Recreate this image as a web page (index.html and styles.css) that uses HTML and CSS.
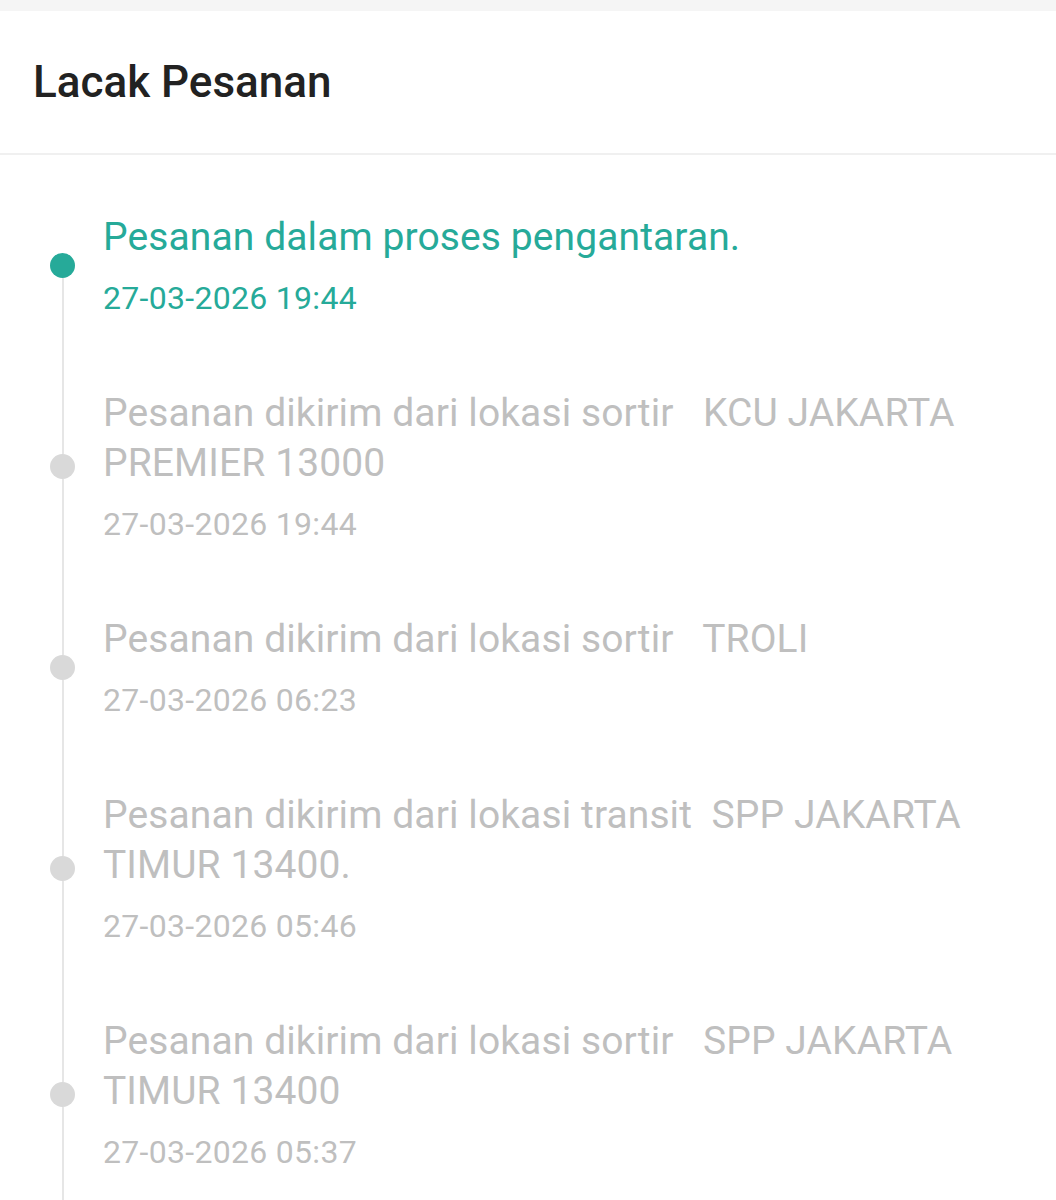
FILE: index.html
```html
<!DOCTYPE html>
<html lang="id">
<head>
<meta charset="utf-8">
<title>Lacak Pesanan</title>
<link rel="stylesheet" href="styles.css">
</head>
<body>
<div class="topbar"></div>
<header class="header">
  <h1 class="header-title">Lacak Pesanan</h1>
</header>
<ol class="timeline">
  <li class="event event-active event-first">
    <div class="rail"><span class="seg seg-top"></span><span class="dot"></span><span class="seg"></span></div>
    <div class="content">
      <div class="title">Pesanan dalam proses pengantaran.</div>
      <div class="date">27-03-2026 19:44</div>
    </div>
  </li>
  <li class="event">
    <div class="rail"><span class="seg"></span><span class="dot"></span><span class="seg"></span></div>
    <div class="content">
      <div class="title">Pesanan dikirim dari lokasi sortir   KCU JAKARTA PREMIER 13000</div>
      <div class="date">27-03-2026 19:44</div>
    </div>
  </li>
  <li class="event">
    <div class="rail"><span class="seg"></span><span class="dot"></span><span class="seg"></span></div>
    <div class="content">
      <div class="title">Pesanan dikirim dari lokasi sortir   TROLI</div>
      <div class="date">27-03-2026 06:23</div>
    </div>
  </li>
  <li class="event">
    <div class="rail"><span class="seg"></span><span class="dot"></span><span class="seg"></span></div>
    <div class="content">
      <div class="title">Pesanan dikirim dari lokasi transit  SPP JAKARTA TIMUR 13400.</div>
      <div class="date">27-03-2026 05:46</div>
    </div>
  </li>
  <li class="event">
    <div class="rail"><span class="seg"></span><span class="dot"></span><span class="seg"></span></div>
    <div class="content">
      <div class="title">Pesanan dikirim dari lokasi sortir   SPP JAKARTA TIMUR 13400</div>
      <div class="date">27-03-2026 05:37</div>
    </div>
  </li>
</ol>
</body>
</html>
```

FILE: styles.css
```css
html, body {
  margin: 0;
  padding: 0;
  background: #ffffff;
  font-family: Roboto, "Noto Sans", "Liberation Sans", sans-serif;
}

.topbar {
  height: 11px;
  background: #f5f5f5;
}

.header {
  height: 142px;
  display: flex;
  align-items: center;
  padding-left: 33px;
  border-bottom: 2px solid #f0f0f0;
}

.header-title {
  margin: 0;
  font-size: 44px;
  font-weight: 500;
  color: #222222;
  letter-spacing: 0;
}

.timeline {
  list-style: none;
  margin: 0;
  padding: 22px 35px 0 0;
}

.event {
  display: flex;
  align-items: stretch;
}

.rail {
  width: 103px;
  flex: 0 0 103px;
  display: flex;
  flex-direction: column;
  align-items: center;
  padding-left: 22px;
  padding-right: 0;
  box-sizing: border-box;
}

.seg {
  flex: 1 1 0;
  width: 2px;
  background: #e6e6e6;
}

.event-first .seg-top {
  background: transparent;
}

.dot {
  width: 25px;
  height: 25px;
  border-radius: 50%;
  background: #d9d9d9;
  flex: 0 0 25px;
}

.event-active .dot {
  background: #26aa99;
}

.content {
  flex: 1 1 auto;
  padding: 35px 0;
}

.title {
  font-size: 39px;
  line-height: 50px;
  letter-spacing: 0.1px;
  color: #bfbfbf;
  white-space: pre-wrap;
}

.date {
  margin-top: 16px;
  font-size: 32px;
  line-height: 40px;
  letter-spacing: 0.3px;
  color: #bfbfbf;
}

.event-active .title,
.event-active .date {
  color: #26aa99;
}
```
